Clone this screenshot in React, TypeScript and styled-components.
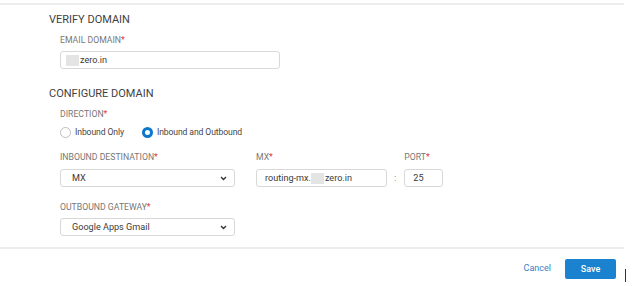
import React from 'react';
import styled, { createGlobalStyle } from 'styled-components';

const GlobalStyle = createGlobalStyle`
  html, body {
    margin: 0;
    padding: 0;
    background: #ffffff;
  }
  body {
    font-family: Roboto, "Noto Sans", "Liberation Sans", sans-serif;
  }
`;

const Page = styled.div`
  width: 640px;
  height: 286px;
  display: flex;
  flex-direction: column;
  overflow: hidden;
  background: #ffffff;
`;

const Rule = styled.div<{ top: number }>`
  width: 624px;
  height: 2px;
  margin-top: ${({ top }) => top}px;
  background: #ededed;
  flex-shrink: 0;
`;

const Content = styled.div`
  display: flex;
  flex-direction: column;
  padding-left: 49px;
`;

const SectionTitle = styled.div<{ top: number }>`
  margin-top: ${({ top }) => top}px;
  font-size: 11px;
  line-height: 13px;
  color: #3f3f3f;
  text-transform: uppercase;
`;

const Field = styled.div`
  display: flex;
  flex-direction: column;
  padding-left: 11px;
`;

const Label = styled.div<{ top: number }>`
  margin-top: ${({ top }) => top}px;
  font-size: 8.7px;
  line-height: 11px;
  color: #777777;
  text-transform: uppercase;
  white-space: nowrap;
`;

const Required = styled.span`
  color: #e0383e;
`;

const TextBox = styled.div<{ top: number; width: number; indent: number }>`
  margin-top: ${({ top }) => top}px;
  width: ${({ width }) => width}px;
  height: 18px;
  box-sizing: border-box;
  border: 1px solid #d8d8d8;
  border-radius: 3px;
  display: flex;
  align-items: center;
  padding-left: ${({ indent }) => indent}px;
  font-size: 9.1px;
  color: #3a3a3a;
  white-space: nowrap;
`;

const Redacted = styled.span<{ w: number }>`
  display: inline-block;
  width: ${({ w }) => w}px;
  height: 11px;
  background: #e4e4e4;
  margin-right: 1px;
`;

const SelectBox = styled(TextBox)`
  justify-content: space-between;
  padding-right: 7px;
`;

const Chevron = () => (
  <svg width="7" height="5" viewBox="0 0 7 5">
    <path d="M1 1 L3.5 3.5 L6 1" fill="none" stroke="#333" strokeWidth="1.4" />
  </svg>
);

const RadioRow = styled.div`
  margin-top: 6px;
  height: 12px;
  display: flex;
  align-items: center;
`;

const RadioItem = styled.label`
  display: flex;
  align-items: center;
  gap: 4px;
  margin-right: 18px;
  font-size: 8.6px;
  letter-spacing: -0.1px;
  color: #454545;
  white-space: nowrap;
`;

const RadioDot = styled.span<{ checked?: boolean }>`
  width: 11px;
  height: 11px;
  box-sizing: border-box;
  border-radius: 50%;
  background: #fff;
  border: ${({ checked }) => (checked ? '3.5px solid #0b78cc' : '1px solid #bdbdbd')};
`;

const DestRow = styled.div`
  display: flex;
  align-items: flex-start;
`;

const Column = styled.div<{ gapRight: number }>`
  display: flex;
  flex-direction: column;
  margin-right: ${({ gapRight }) => gapRight}px;
`;

const Colon = styled.div`
  margin-top: 34px;
  margin-right: 8px;
  font-size: 9.5px;
  line-height: 11px;
  color: #888;
`;

const Footer = styled.div`
  margin-top: 10px;
  display: flex;
  align-items: flex-start;
  justify-content: flex-end;
  padding-right: 14px;
`;

const CancelLink = styled.a`
  margin-top: 4px;
  margin-right: 14px;
  font-size: 9px;
  line-height: 11px;
  color: #3a7fc6;
  text-decoration: none;
`;

const SaveButton = styled.button`
  width: 51px;
  height: 20px;
  border: none;
  border-radius: 2px;
  background: #1b82d0;
  color: #ffffff;
  font-family: inherit;
  font-size: 9px;
  font-weight: 500;
  padding: 0;
`;

const Caret = styled.div`
  width: 1px;
  height: 13px;
  margin-top: 10px;
  margin-left: 9px;
  background: #333;
`;

export default function App() {
  return (
    <Page>
      <GlobalStyle />
      <Rule top={3} />
      <Content>
        <SectionTitle top={8}>Verify Domain</SectionTitle>
        <Field>
          <Label top={9}>
            Email Domain<Required>*</Required>
          </Label>
          <TextBox top={5} width={220} indent={5}>
            <Redacted w={13} />
            zero.in
          </TextBox>
        </Field>

        <SectionTitle top={18}>Configure Domain</SectionTitle>
        <Field>
          <Label top={9}>
            Direction<Required>*</Required>
          </Label>
          <RadioRow>
            <RadioItem>
              <RadioDot />
              Inbound Only
            </RadioItem>
            <RadioItem>
              <RadioDot checked />
              Inbound and Outbound
            </RadioItem>
          </RadioRow>

          <DestRow>
            <Column gapRight={21}>
              <Label top={14}>
                Inbound Destination<Required>*</Required>
              </Label>
              <SelectBox top={6} width={175} indent={11}>
                MX
                <Chevron />
              </SelectBox>
            </Column>
            <Column gapRight={7}>
              <Label top={14}>
                MX<Required>*</Required>
              </Label>
              <TextBox top={6} width={131} indent={8}>
                routing-mx.
                <Redacted w={13} />
                zero.in
              </TextBox>
            </Column>
            <Colon>:</Colon>
            <Column gapRight={0}>
              <Label top={14}>
                Port<Required>*</Required>
              </Label>
              <TextBox top={6} width={39} indent={8}>
                25
              </TextBox>
            </Column>
          </DestRow>

          <Label top={15}>
            Outbound Gateway<Required>*</Required>
          </Label>
          <SelectBox top={5} width={175} indent={11}>
            Google Apps Gmail
            <Chevron />
          </SelectBox>
        </Field>
      </Content>
      <Rule top={11} />
      <Footer>
        <CancelLink>Cancel</CancelLink>
        <SaveButton>Save</SaveButton>
        <Caret />
      </Footer>
    </Page>
  );
}
